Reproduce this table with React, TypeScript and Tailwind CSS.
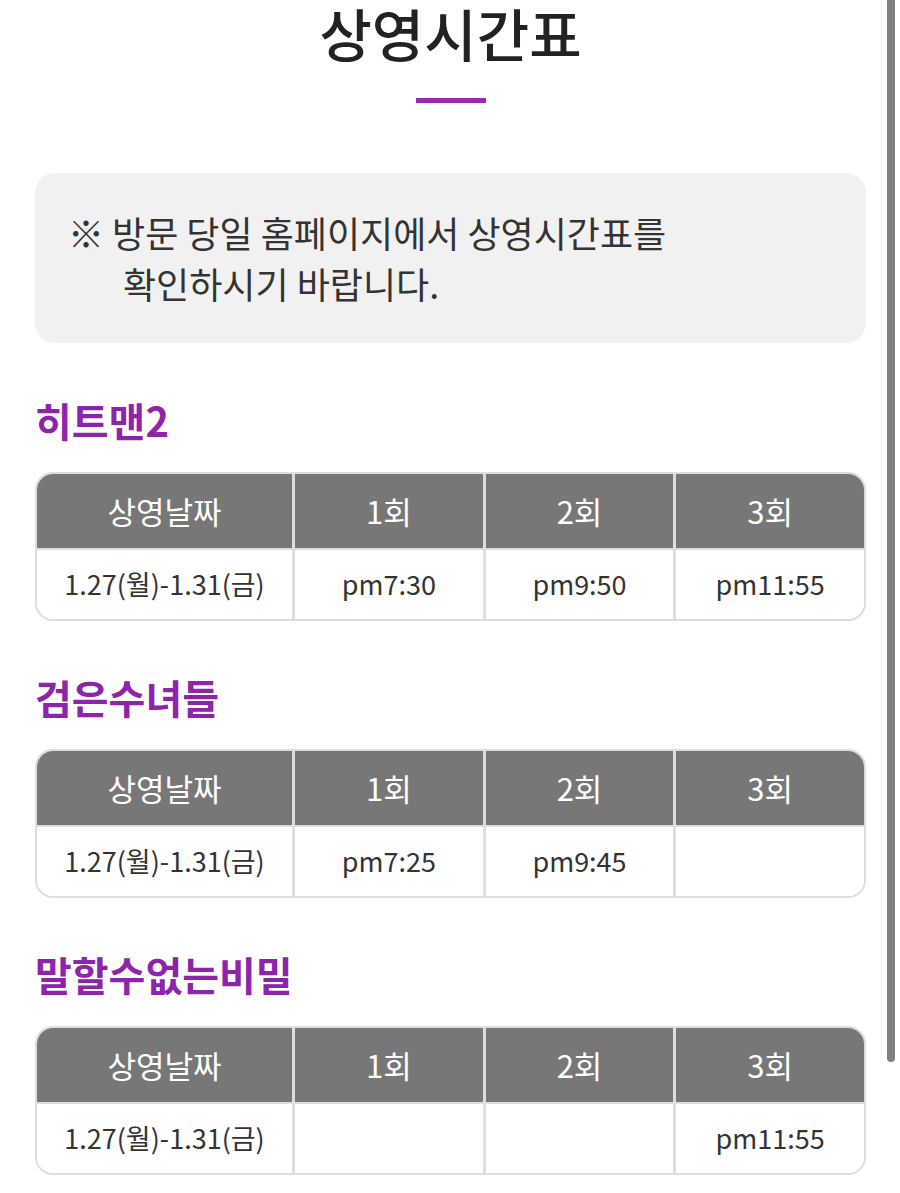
import React from 'react';

type Show = {
    title: string;
    times: [string, string, string];
};

const shows: Show[] = [
    { title: '히트맨2', times: ['pm7:30', 'pm9:50', 'pm11:55'] },
    { title: '검은수녀들', times: ['pm7:25', 'pm9:45', ''] },
    { title: '말할수없는비밀', times: ['', '', 'pm11:55'] },
];

const font = { fontFamily: '"Noto Sans CJK KR", "Noto Sans", sans-serif' };

const ScheduleTable = ({ times }: { times: Show['times'] }) => {
    const heads = ['상영날짜', '1회', '2회', '3회'];
    const cells = ['1.27(월)-1.31(금)', ...times];

    return (
        <div className="mt-[28px] border-2 border-[#dddddd] rounded-[18px] overflow-hidden">
            <div className="grid grid-cols-[255px_1fr_1fr_1fr] bg-[#777777] h-[74px]">
                {heads.map((h, i) => (
                    <div
                        key={h}
                        className={`flex items-center justify-center text-white text-[31px] ${i > 0 ? 'border-l-[3px] border-[#dddddd]' : ''}`}
                    >
                        {h}
                    </div>
                ))}
            </div>
            <div className="grid grid-cols-[255px_1fr_1fr_1fr] h-[71px] border-t-2 border-[#dddddd] bg-white">
                {cells.map((c, i) => (
                    <div
                        key={i}
                        className={`flex items-center justify-center text-[#333333] text-[27px] ${i > 0 ? 'border-l-[3px] border-[#dddddd]' : ''}`}
                    >
                        {c}
                    </div>
                ))}
            </div>
        </div>
    );
};

const App = () => {
    return (
        <div className="relative w-[900px] h-[1193px] overflow-hidden bg-white" style={font}>
            <div className="px-[35px] pr-[34px]">
                <h1 className="text-center text-[57px] leading-[64px] font-medium text-[#222222]">
                    상영시간표
                </h1>
                <div className="mx-auto mt-[34px] w-[70px] h-[5px] bg-[#9c27b0]" />

                <div className="mt-[70px] h-[170px] rounded-[20px] bg-[#f1f1f1] pt-[34px] pl-[33px]">
                    <p className="text-[36px] leading-[51px] text-[#333333]">
                        ※ 방문 당일 홈페이지에서 상영시간표를
                    </p>
                    <p className="text-[36px] leading-[51px] text-[#333333] pl-[55px]">
                        확인하시기 바랍니다.
                    </p>
                </div>

                {shows.map((s, i) => (
                    <section key={s.title} className={i === 0 ? 'mt-[53px]' : 'mt-[52px]'}>
                        <h2 className="text-[40px] leading-[48px] font-bold text-[#8e24aa]">
                            {s.title}
                        </h2>
                        <ScheduleTable times={s.times} />
                    </section>
                ))}
            </div>

            {/* overlay scrollbar */}
            <div className="absolute left-[887px] top-0 w-[8px] h-[1062px] rounded-b-full bg-[#808080]" />
        </div>
    );
};

export default App;
